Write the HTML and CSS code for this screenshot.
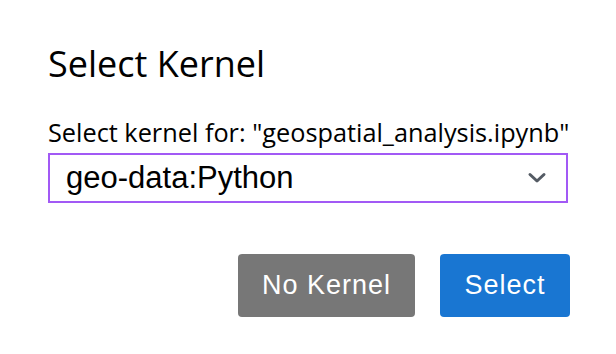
FILE: index.html
```html
<!DOCTYPE html>
<html lang="en">
<head>
    <meta charset="UTF-8">
    <meta name="viewport" content="width=device-width, initial-scale=1.0">
    <title>Select Kernel</title>
    <link rel="stylesheet" href="styles.css">
</head>
<body>
<div class="dialog">
    <h1 class="dialog-title">Select Kernel</h1>

    <div class="dialog-body">
        <label class="field-label" for="kernel">Select kernel for: "geospatial_analysis.ipynb"</label>
        <div class="select-box">
            <span class="select-value">geo-data:Python</span>
            <svg class="select-caret" width="20" height="12" viewBox="0 0 20 12">
                <path d="M3 2.5 L10 9 L17 2.5" fill="none" stroke="#545b64" stroke-width="3" stroke-linecap="round" stroke-linejoin="round"/>
            </svg>
        </div>
    </div>

    <!-- 하단 버튼 -->
    <div class="dialog-actions">
        <button class="btn btn-secondary">No Kernel</button>
        <button class="btn btn-primary">Select</button>
    </div>
</div>
</body>
</html>
```

FILE: styles.css
```css
* {
    margin: 0;
    padding: 0;
    box-sizing: border-box;
}

body {
    font-family: "Open Sans", "Noto Sans", sans-serif;
    background: #ffffff;
    color: #000000;
}

.dialog {
    width: 616px;
    height: 354px;
    padding: 42px 46px 0 48px;
}

.dialog-title {
    font-size: 36px;
    font-weight: 500;
    line-height: 44px;
    color: #000000;
}

.dialog-body {
    margin-top: 31px;
}

.field-label {
    display: block;
    font-size: 25.3px;
    line-height: 30px;
    color: #000000;
}

.select-box {
    margin: 6px 2px 0 0;
    height: 50px;
    border: 2px solid #a259f5;
    display: flex;
    align-items: center;
    justify-content: space-between;
    padding: 0 19px 0 16px;
}

.select-value {
    font-family: "Liberation Sans", Arial, sans-serif;
    font-size: 31px;
    color: #000000;
}

.select-caret {
    display: block;
}

.dialog-actions {
    margin-top: 51px;
    display: flex;
    justify-content: flex-end;
    gap: 25px;
}

.btn {
    height: 63px;
    border: none;
    border-radius: 4px;
    font-family: "Liberation Sans", Arial, sans-serif;
    font-size: 27px;
    letter-spacing: 1px;
    color: #ffffff;
    cursor: pointer;
}

.btn-secondary {
    width: 177px;
    background: #777777;
}

.btn-primary {
    width: 130px;
    background: #1976d2;
}
```
